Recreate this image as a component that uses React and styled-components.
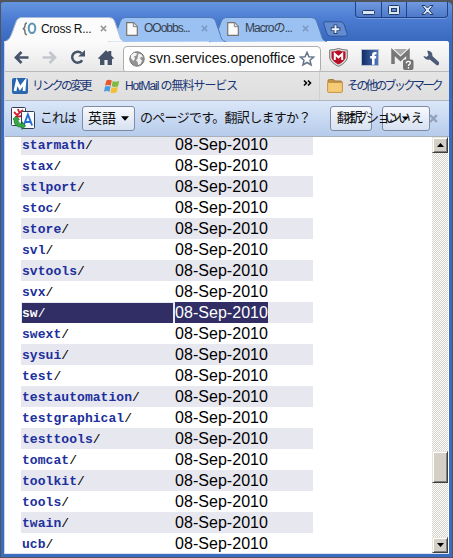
import React from "react";
import styled, { createGlobalStyle } from "styled-components";

const GlobalStyle = createGlobalStyle`
  * { box-sizing: border-box; }
  body { margin: 0; overflow: hidden; background: #55575c; }
`;

const Window = styled.div`
  width: 453px;
  height: 558px;
  display: flex;
  flex-direction: column;
  padding: 0 3px 3px 4px;
  border: 1px solid #50545c;
  border-top-width: 2px;
  border-radius: 4px 6px 0 0;
  background: linear-gradient(#6594df 0, #4b7bd1 18px, #396abf 38px, #3b6cc0 100%);
  font-family: "Liberation Sans", "Noto Sans CJK JP", sans-serif;
  color: #000;
`;

const TitleBar = styled.header`
  height: 39px;
  flex: none;
  display: flex;
  align-items: flex-start;
  margin: 0 -3px 0 -1px;
`;

const TabShell = styled.div`
  position: relative;
  flex: none;
  width: ${(p) => p.$width}px;
  height: ${(p) => (p.$active ? 25 : 24)}px;
  margin: 15px -15px 0 0;
  padding: 0 0 1px 18px;
  z-index: ${(p) => p.$level};
  display: flex;
  align-items: center;
  gap: ${(p) => (p.$active ? 4 : 6)}px;
`;

const TabShape = styled.svg`
  position: absolute;
  inset: 0;
  z-index: -1;
  overflow: visible;
`;

const TabClose = styled.div`
  position: absolute;
  right: 16px;
  top: 8px;
`;

const Label = styled.span`
  flex: none;
  white-space: nowrap;
  font-size: ${(p) => p.$size || 12}px;
  line-height: 1.25;
  letter-spacing: ${(p) => p.$track || 0}px;
  margin-left: ${(p) => p.$left || 0}px;
  color: ${(p) => p.$color || "#111"};
  ${(p) => p.$width && `width: ${p.$width}px;`}
`;

const Icon = styled.svg`
  flex: none;
  display: block;
  overflow: visible;
  margin-left: ${(p) => p.$left || 0}px;
  margin-top: ${(p) => p.$top || 0}px;
`;

const NewTab = styled(Icon)`
  margin: 19px 0 0 13px;
`;

const Controls = styled.div`
  display: flex;
  margin-left: auto;
  margin-right: 4px;
  height: 16px;
  border: 1px solid #1e4188;
  border-top: 0;
  border-radius: 0 0 4px 4px;
  background: linear-gradient(#7199df, #4c79c9);
  box-shadow: 0 1px 0 #759ade;
`;

const Control = styled.div`
  width: ${(p) => p.$width}px;
  display: flex;
  align-items: center;
  justify-content: center;
  & + & { border-left: 1px solid #1e4188; }
`;

const Chrome = styled.div`
  flex: 1;
  min-height: 0;
  display: flex;
  flex-direction: column;
  border-radius: 0 3px 0 0;
  margin-left: -1px;
  border-left: 1px solid #c3d4ef;
  border-bottom: 1px solid #dce4ee;
  overflow: hidden;
  background: #fff;
`;

const Toolbar = styled.div`
  height: 30px;
  flex: none;
  display: flex;
  align-items: center;
  padding: 3px 0 0 9px;
  background: linear-gradient(#fbfbfb, #e8e8e8);
`;

const Address = styled.div`
  flex: none;
  width: 198px;
  height: 27px;
  margin: 3px 0 0 9px;
  padding-left: 5px;
  display: flex;
  align-items: center;
  border: 1px solid #adadad;
  border-radius: 4px;
  background: #fff;
`;

const BookmarkBar = styled.div`
  height: 30px;
  flex: none;
  display: flex;
  align-items: center;
  padding: 0 9px 0 7px;
  border-top: 1px solid #b9b9bb;
  border-bottom: 1px solid #b1b7c1;
  background: linear-gradient(#e5e5e5, #dedede);
`;

const Overflow = styled.div`
  width: 20px;
  height: 28px;
  margin-left: auto;
  padding: 8px 0 0 3px;
  border-right: 1px solid #cfd0d2;
`;

const TranslateBar = styled.div`
  height: 36px;
  flex: none;
  display: flex;
  align-items: center;
  padding-left: 6px;
  background: linear-gradient(#dbe6f8, #b6cceb);
  border-bottom: 1px solid #aab0b9;
`;

const Button = styled.div`
  flex: none;
  width: ${(p) => p.$width}px;
  height: 25px;
  margin-left: ${(p) => p.$left}px;
  padding-left: ${(p) => p.$pad}px;
  display: flex;
  align-items: center;
  border: 1px solid #7d8ca4;
  border-radius: 3px;
  background: linear-gradient(#f7f9fc, #d7e1f1);
  white-space: nowrap;
`;

/* The options menu label sits over the neighbouring buttons. */
const OptionsMenu = styled.div`
  position: absolute;
  left: 344px;
  top: 110px;
  z-index: 4;
  display: flex;
  align-items: center;
`;

const Page = styled.main`
  flex: 1;
  min-height: 0;
  display: flex;
  justify-content: space-between;
  padding-right: 1px;
  overflow: hidden;
`;

const Listing = styled.div`
  width: 292px;
  margin: -3px 0 0 16px;
`;

const Row = styled.div`
  height: 21px;
  display: grid;
  grid-template-columns: 152px 94px;
  column-gap: 2px;
  background: ${(p) => (p.$striped ? "#e7e7f0" : "#fff")};
`;

const Name = styled.div`
  height: 20px;
  margin: 1px 0 0 1px;
  font: 13px/22px "Liberation Mono", monospace;
  letter-spacing: 0.06px;
  color: ${(p) => (p.$selected ? "#fff" : "#000")};
  background: ${(p) => (p.$selected ? "#302e64" : "transparent")};
  b { color: ${(p) => (p.$selected ? "#fff" : "#202f9c")}; }
`;

const DateCell = styled.div`
  width: 93px;
  font-size: 16px;
  line-height: 21px;
  letter-spacing: 0.04px;
  color: ${(p) => (p.$selected ? "#fff" : "#000")};
  background: ${(p) => (p.$selected ? "#302e64" : "transparent")};
`;

const Scrollbar = styled.div`
  width: 16px;
  display: flex;
  flex-direction: column;
  background: repeating-conic-gradient(#fff 0 25%, #d5d2cb 0 50%) 0 0 / 2px 2px;
`;

const ScrollPiece = styled.div`
  height: ${(p) => p.$height}px;
  margin-top: ${(p) => p.$top || 0}px;
  flex: none;
  display: flex;
  align-items: center;
  justify-content: center;
  background: #d4d0c8;
  border: 1px solid;
  border-color: #e8e5dd #404040 #404040 #e8e5dd;
  box-shadow: inset 1px 1px #fff, inset -1px -1px #808080;
`;

const Cross = ({ color = "#9a9da2", size = 7, left, weight = 1.8 }) => (
  <Icon width={size} height={size} viewBox="0 0 8 8" $left={left}>
    <path d="M1 1l6 6M7 1l-6 6" stroke={color} strokeWidth={weight} />
  </Icon>
);

const PageIcon = () => (
  <Icon width="12" height="14" viewBox="0 0 12 14">
    <path d="M.7.7h6.8l3.8 3.8v8.8H.7z" fill="#fbfbfb" stroke="#77736f" strokeWidth="1.2" />
    <path d="M7.3.7v4h4" fill="#ddd" stroke="#8a8682" />
  </Icon>
);

function Tab({ width: w, active, level, icon, title, track }) {
  return (
    <TabShell $width={w} $active={active} $level={level}>
      <TabShape width={w} height="25">
        <path
          d={`M0 25C5 23 6 21 8 16L12 5Q13.5 .5 18 .5H${w - 14}Q${w - 9.5} .5 ${w - 8.5} 4L${w - 4} 17C${w - 3} 21 ${w - 2} 24 ${w + 2} 24.5`}
          fill={active ? "#fbfbfb" : "#9bc1f2"}
          stroke={active ? "#a9bdda" : "#4e79b8"}
        />
        {active && <path d={`M0 25.2H${w}`} stroke="#fbfbfb" />}
      </TabShape>
      {icon}
      <Label $track={track} $color={active ? "#111" : "#35404f"}>{title}</Label>
      <TabClose><Cross color={active ? "#999" : "#7c9cc7"} /></TabClose>
    </TabShell>
  );
}

const CodeIcon = () => (
  <Icon width="15" height="14" viewBox="0 0 15 14">
    <path d="M5 1Q3 1 3 3.5Q3 6.5 .8 6.8Q3 7 3 10Q3 12.7 5 12.7" fill="none" stroke="#777" strokeWidth="1.5" />
    <ellipse cx="10" cy="6.3" rx="3.3" ry="4.8" fill="none" stroke="#5b94b5" strokeWidth="2" />
  </Icon>
);

const Arrow = ({ color, left, flip }) => (
  <Icon width="15" height="13" viewBox="0 0 15 13" $left={left}>
    <path d="M7.5 1L2 6.5l5.5 5.5M2 6.5h12.5" transform={flip ? "translate(15 0) scale(-1 1)" : undefined} fill="none" stroke={color} strokeWidth="2.7" />
  </Icon>
);

const Reload = () => (
  <Icon width="16" height="15" viewBox="0 0 16 15" $left={13}>
    <path d="M11.5 3.2A5.5 5.5 0 1 0 12.2 10.3" fill="none" stroke="#465369" strokeWidth="2.5" />
    <path d="M15 0v6.5H8.2z" fill="#465369" />
  </Icon>
);

const Home = () => (
  <Icon width="16" height="15" viewBox="0 0 16 15" $left={12}>
    <path d="M0 8.3L8 .3l2.3 2.3V1h3v4.6L16 8.3l-1.1 1L14 8.5V15H9.6v-5H6.4v5H2V8.5l-.9.8z" fill="#465369" />
  </Icon>
);

const Globe = () => (
  <Icon width="16" height="16" viewBox="0 0 16 16">
    <circle cx="8" cy="8" r="7.2" fill="#939393" stroke="#777" strokeWidth="1" />
    <path d="M2 4L5 1.8l3 .5-.7 2.2L5 5.5l1 2L4.5 10 2 7.5zM9.5 2.5l3 1L14 6.5l-2-.8-1 1.7 2 2.2-1.5 3.5L9 14l-.3-3L7 9.5l1.5-2L9 5z" fill="#f4f4f4" />
  </Icon>
);

const Star = () => (
  <Icon width="16" height="16" viewBox="0 0 16 16" $left={3}>
    <path d="M8 1.3l1.9 4.4 4.7.4-3.6 3.1 1.1 4.8L8 11.5 3.9 14 5 9.2 1.4 6.1l4.7-.4z" fill="#fff" stroke="#677489" strokeWidth="1.5" />
  </Icon>
);

const Shield = () => (
  <Icon width="19" height="19" viewBox="0 0 19 19" $left={8}>
    <path d="M.7 2Q5 2 9.5.5 14 2 18.3 2V10Q17 15 9.5 18.4 2 15 .7 10z" fill="#ddd" stroke="#777" />
    <path d="M2.5 3.5Q6 3.4 9.5 2.2q3.5 1.2 7 1.3v6.2q-1 3.8-7 6.8-6-3-7-6.8z" fill="#b80e26" />
    <path d="M5.8 12V6l3.7 3.3L13.2 6v6" fill="none" stroke="#fff" strokeWidth="2" />
  </Icon>
);

const Facebook = () => (
  <Icon width="18" height="17" viewBox="0 0 18 17" $left={13}>
    <defs><linearGradient id="fb"><stop stopColor="#112b65" /><stop offset="1" stopColor="#5277bc" /></linearGradient></defs>
    <path d="M.5.5h17v16H.5z" fill="url(#fb)" stroke="#b7c0d0" />
    <path d="M15.5 4.2h-1.4q-1.8 0-1.8 2v9.5M9.2 8.3h6" fill="none" stroke="#fff" strokeWidth="2.6" />
  </Icon>
);

const Mail = () => (
  <Icon width="23" height="21" viewBox="0 0 23 21" $left={12} $top={3}>
    <path d="M0 1h19v14H0z" fill="#eee" />
    <path d="M2 15V3l7.5 7L17 3v12" fill="none" stroke="#777" strokeWidth="3.5" />
    <path d="M3 0h13L9.5 6z" fill="#aaa" />
    <rect x="12" y="10.5" width="10.5" height="10.5" rx="2" fill="#747474" />
    <path d="M15.3 14.2q0-1.8 2-1.8t2 1.7q0 1-1.7 2v1M17.5 18.1v1.4" fill="none" stroke="#fff" strokeWidth="1.4" />
  </Icon>
);

const Wrench = () => (
  <Icon width="17" height="16" viewBox="0 0 17 16" $left={9}>
    <path d="M4.5.4A5 5 0 0 1 9.4 6l6.4 6q1.2 3-1.8 3.5L6.7 9.5Q2.3 10.5.3 5.7L3.4 7l2.1-1.8-1-3.3z" fill="#4c5b77" />
  </Icon>
);

const MIcon = () => (
  <Icon width="16" height="16" viewBox="0 0 16 16">
    <rect width="16" height="16" rx="2" fill="#2867ae" />
    <path d="M3 13L5 4l3 6.2L12.8 4 12 13" fill="none" stroke="#fff" strokeWidth="2.8" />
  </Icon>
);

const WindowsIcon = () => (
  <Icon width="16" height="15" viewBox="0 0 16 15" $left={12}>
    <path d="M2.4 1.5Q5 0 7.8 1.6L6.7 6.7Q4 5.4 1.1 6.7z" fill="#e5572c" />
    <path d="M8.7 2q3 1.4 6.5-.1L14 7.2q-3 1.3-6.3.1z" fill="#7fba42" />
    <path d="M1 7.5q2.6-1.2 5.6 0L5.4 12.8q-2.8-1.4-5.4 0z" fill="#4b9be2" />
    <path d="M7.5 8.2q3 1.2 6.4-.1l-1.2 5.2q-3 1.5-6.3.1z" fill="#f4bf35" />
  </Icon>
);

const Folder = () => (
  <Icon width="16" height="14" viewBox="0 0 16 14" $left={7}>
    <path d="M1 3V1.8Q1 .6 2.2.6h4Q7.3.6 7.3 2h6.5Q15 2 15 3.2V12" fill="#c5974a" stroke="#a37834" />
    <path d="M.6 3.5h14.8v8.8q0 1.1-1.2 1.1H1.8Q.6 13.4.6 12.3z" fill="#f5cb78" stroke="#c69345" />
  </Icon>
);

const TranslateIcon = () => (
  <Icon width="24" height="23" viewBox="0 0 24 23">
    <rect x=".5" y=".5" width="14" height="18" rx="1" fill="#fff" stroke="#333f51" />
    <path d="M3 5l3 3 6-5M7 2l1 3M4 10l7-1" fill="none" stroke="#d51c2d" strokeWidth="1.8" />
    <rect x="10.5" y="4.5" width="13" height="17" rx="1" fill="#f8fbff" stroke="#333f51" />
    <path d="M12.7 18.5l4.2-11 4.2 11M14.2 15h5.4" fill="none" stroke="#246bd2" strokeWidth="1.9" />
    <path d="M2 12l3-2.6 3.5 3H6.8Q7 16.5 11 17v-2.4l3.5 4.3-3.5 3.6v-2.2Q2.5 20 3 13z" fill="#35a847" stroke="#17712b" strokeWidth=".7" />
  </Icon>
);

const Down = ({ width = 9, left }) => (
  <Icon width={width} height="5" viewBox="0 0 9 5" $left={left}><path d="M0 0h9L4.5 5z" fill="#000" /></Icon>
);

const directories = ["starmath", "stax", "stlport", "stoc", "store", "svl", "svtools", "svx", "sw", "swext", "sysui", "test", "testautomation", "testgraphical", "testtools", "tomcat", "toolkit", "tools", "twain", "ucb"];

export default function App() {
  return (
    <>
      <GlobalStyle />
      <Window>
        <TitleBar>
          <Tab width={119} active level={3} icon={<CodeIcon />} title="Cross R..." track={-0.3} />
          <Tab width={116} level={2} icon={<PageIcon />} title="OOobbs..." track={-1} />
          <Tab width={116} level={1} icon={<PageIcon />} title="Macroの..." track={-0.95} />
          <NewTab width="25" height="16" viewBox="0 0 26 16">
            <path d="M2 .5h16q3 0 4 3l3 9q1 3-3 3H8q-3 0-4-3L.8 3Q0 .5 2 .5z" fill="#638bd0" stroke="#2a529b" />
            <path d="M13 3.2v10M8 8.2h10" stroke="#28446f" strokeWidth="4" />
            <path d="M13 4.2v8M9 8.2h8" stroke="#e9f1ff" strokeWidth="2" />
          </NewTab>
          <Controls>
            <Control $width={25}><Icon width="13" height="6" $top={6}><rect x=".5" y=".5" width="12" height="4" rx="1" fill="#d8e6fa" stroke="#263b61" /></Icon></Control>
            <Control $width={25}><Icon width="13" height="10"><rect x=".5" y=".5" width="11" height="9" rx="1" fill="#d8e6fa" stroke="#263b61" /><rect x="3.5" y="3.5" width="5" height="3" fill="#6089cc" stroke="#263b61" /></Icon></Control>
            <Control $width={41}><Icon width="13" height="10"><path d="M1 .5h3l2.5 2.5L9 .5h3L8.2 5 12 9.5H9L6.5 7 4 9.5H1L4.8 5z" fill="#d8e6fa" stroke="#263b61" /></Icon></Control>
          </Controls>
        </TitleBar>
        <Chrome>
          <Toolbar>
            <Arrow color="#465369" />
            <Arrow color="#c3c7cd" left={13} flip />
            <Reload />
            <Home />
            <Address>
              <Globe />
              <Label $size={14} $left={4} $track={0.05} $width={147}>svn.services.openoffice</Label>
              <Star />
            </Address>
            <Shield />
            <Facebook />
            <Mail />
            <Wrench />
          </Toolbar>
          <BookmarkBar>
            <MIcon />
            <Label $left={4} $color="#173474" $track={-2.3} $width={60}>リンクの変更</Label>
            <WindowsIcon />
            <Label $left={5} $color="#173474" $track={-1.05}>HotMail の無料サービス</Label>
            <Overflow><Icon width="9" height="7"><path d="M1 .5L3.5 3 1 5.5M5 .5L7.5 3 5 5.5" fill="none" stroke="#000" strokeWidth="1.6" /></Icon></Overflow>
            <Folder />
            <Label $left={4} $size={12} $color="#173474" $track={-2.6} $width={93}>その他のブックマーク</Label>
          </BookmarkBar>
          <TranslateBar>
            <TranslateIcon />
            <Label $left={5} $size={13} $track={-1}>これは</Label>
            <Button $width={53} $left={6} $pad={5}><Label $size={14}>英語</Label><Down left={5} width={8} /></Button>
            <Label $left={5} $size={13} $track={-0.7}>のページです。翻訳しますか？</Label>
            <Button $width={42} $left={19} $pad={6}><Label $size={13}>翻訳</Label></Button>
            <Button $width={48} $left={10} $pad={2}><Label $size={13}>いいえ</Label></Button>
            <Cross left={-1} size={9} color="#92a2ba" weight={2} />
            <OptionsMenu><Label $size={13} $track={-2}>オプション</Label><Down left={3} width={7} /></OptionsMenu>
          </TranslateBar>
          <Page>
            <Listing>
              {directories.map((name, i) => (
                <Row key={name} $striped={i % 2 === 0}>
                  <Name $selected={name === "sw"}><b>{name}</b>/</Name>
                  <DateCell $selected={name === "sw"}>08-Sep-2010</DateCell>
                </Row>
              ))}
            </Listing>
            <Scrollbar>
              <ScrollPiece $height={16}><Icon width="7" height="4"><path d="M0 4L3.5 0 7 4z" /></Icon></ScrollPiece>
              <ScrollPiece $height={32} $top={298} />
              <ScrollPiece $height={16} $top={54}><Icon width="7" height="4"><path d="M0 0h7L3.5 4z" /></Icon></ScrollPiece>
            </Scrollbar>
          </Page>
        </Chrome>
      </Window>
    </>
  );
}
